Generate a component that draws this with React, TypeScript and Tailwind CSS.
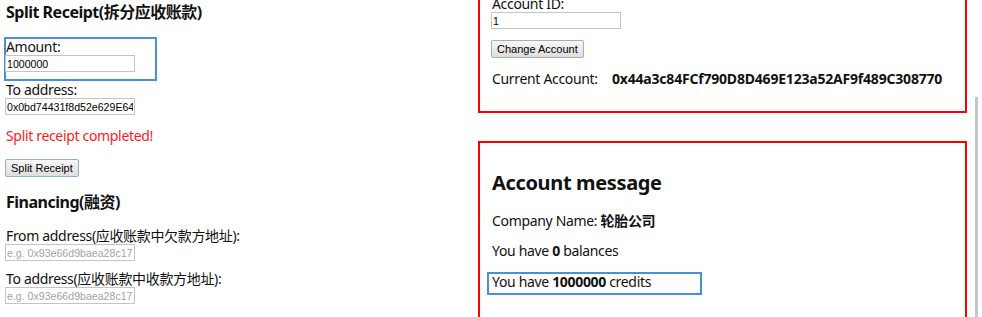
const body = "font-['Noto_Sans','Noto_Sans_CJK_SC',sans-serif]";

function Field({ label, value, placeholder }: { label: string; value?: string; placeholder?: string }) {
  return (
    <input
      readOnly
      defaultValue={value}
      placeholder={placeholder}
      aria-label={label}
      className="block h-[17px] w-[130px] -ml-[1px] border border-[#c4c4c4] bg-white px-[1px] font-['Liberation_Sans',sans-serif] text-[10.6px] tracking-normal text-black outline-none placeholder:text-[#a3a3a3]"
    />
  );
}

function Btn({ children, blue }: { children: string; blue?: boolean }) {
  return (
    <button
      className={
        "block h-[18px] -ml-[1px] rounded-[2px] border bg-gradient-to-b from-[#f7f7f7] to-[#dddddd] px-[5px] font-['Liberation_Sans',sans-serif] text-[11px] leading-none tracking-normal text-black " +
        (blue ? "border-[#8fb0d6]" : "border-[#adadad]")
      }
    >
      {children}
    </button>
  );
}

function App() {
  return (
    <div className={`relative flex h-[317px] w-[982px] overflow-hidden bg-white text-[14px] tracking-[-0.33px] text-[#111] ${body}`}>
      {/* left column */}
      <div className="w-[478px] shrink-0 pl-[6px]">
        <h2 className="mt-[1px] text-[16px] font-bold leading-[22px] tracking-[-0.5px]">Split Receipt(拆分应收账款)</h2>

        <div className="mt-[14px] -ml-[2px] w-[153px] border-2 border-[#4a90d9] pb-[7px]">
          <label className="block leading-[16px]">Amount:</label>
          <Field label="Amount" value="1000000" />
        </div>

        <label className="mt-[1px] block leading-[16px]">To address:</label>
        <Field label="To address" value="0x0bd74431f8d52e629E64" />

        <p className="mt-[11px] leading-[20px] text-[#ff1a1a]">Split receipt completed!</p>

        <div className="mt-[13px]">
          <Btn blue>Split Receipt</Btn>
        </div>

        <h2 className="mt-[14px] text-[16px] font-bold leading-[22px] tracking-[-0.5px]">Financing(融资)</h2>

        <label className="mt-[15px] block leading-[16px]">From address(应收账款中欠款方地址):</label>
        <Field label="From address" placeholder="e.g. 0x93e66d9baea28c17" />

        <label className="mt-[10px] block leading-[16px]">To address(应收账款中收款方地址):</label>
        <Field label="To address" placeholder="e.g. 0x93e66d9baea28c17" />
      </div>

      {/* right column */}
      <div className="-mt-[20px] w-[489px] shrink-0">
        <div className="border-2 border-[#ff0000] px-[12px] pt-[14px] pb-[22px]">
          <label className="block leading-[16px]">Account ID:</label>
          <Field label="Account ID" value="1" />
          <div className="mt-[11px]">
            <Btn>Change Account</Btn>
          </div>
          <div className="mt-[11px] flex leading-[20px]">
            <span className="w-[120px]">Current Account:</span>
            <span className="font-bold tracking-[-0.2px]">0x44a3c84FCf790D8D469E123a52AF9f489C308770</span>
          </div>
        </div>

        <div className="mt-[28px] h-[300px] border-2 border-[#ff0000] px-[12px] pt-[26px]">
          <h1 className="text-[20px] font-bold leading-[28px] tracking-[-0.35px]">Account message</h1>
          <p className="mt-[14px] leading-[20px]">
            Company Name: <b>轮胎公司</b>
          </p>
          <p className="mt-[10px] leading-[20px]">
            You have <b>0</b> balances
          </p>
          <p className="mt-[11px] -ml-[5px] w-[215px] border-2 border-[#4a90d9] pl-[3px] pb-[4px] leading-[15px]">
            You have <b>1000000</b> credits
          </p>
        </div>
      </div>

      {/* scrollbar thumb edge */}
      <div className="absolute left-[975px] top-[97px] h-[220px] w-[3px] bg-[#c6c6c6]" />
    </div>
  );
}

export default App;
